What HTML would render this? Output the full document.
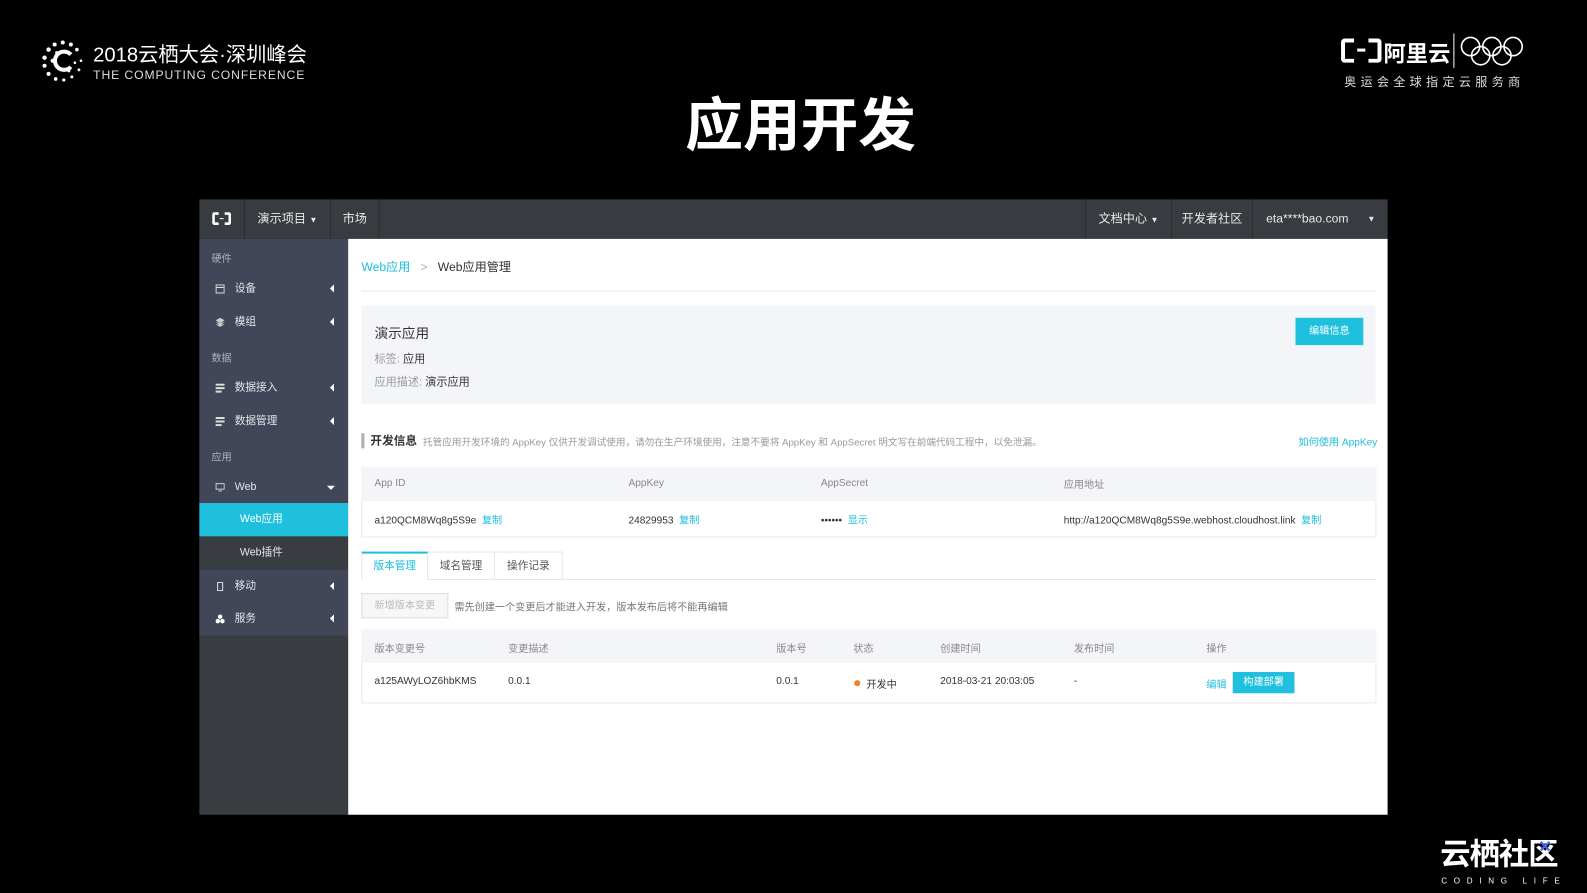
<!DOCTYPE html>
<html><head><meta charset="utf-8"><style>
*{margin:0;padding:0;box-sizing:border-box}
body{width:1587px;height:893px;background:#000;position:relative;overflow:hidden;font-family:"Liberation Sans","Noto Sans CJK SC",sans-serif;}
#wrap{position:absolute;left:0;top:0;width:1568px;height:882px;transform:scale(1.0121);transform-origin:0 0}
.a{position:absolute;white-space:nowrap}
.w{color:#fff}
.nav{position:absolute;left:197px;top:197px;width:1174px;height:39px;background:#383c41}
.nv{position:absolute;top:0;height:39px;line-height:39px;color:#e8e8e8;font-size:12px;border-right:1px solid #2b2e32;text-align:center}
.side{position:absolute;left:197px;top:236px;width:147px;height:569px;background:#393d42}
.sb{position:absolute;left:0;top:0;width:147px;height:392px;background:#424659}
.sl{position:absolute;left:12px;font-size:10px;color:#aeb1bd}
.si{position:absolute;left:0;width:147px;height:33px;line-height:33px;font-size:10.5px;color:#e4e5ea;padding-left:35px}
.si .ic{position:absolute;left:16px;top:12px;width:9px;height:9px}
.si .ar{position:absolute;right:14px;top:12px;width:0;height:0;border-top:4px solid transparent;border-bottom:4px solid transparent;border-right:4px solid #fff}
.main{position:absolute;left:344px;top:236px;width:1027px;height:569px;background:#fff}
.t{font-size:10px;color:#333}
.g{color:#888}
.b{color:#1fbfde}
</style></head><body><div id="wrap">
<svg class="a" style="left:40px;top:38px" width="44" height="44" viewBox="0 0 44 44">
<g fill="#fff">
<circle cx="22" cy="4" r="2"/><circle cx="30" cy="6" r="2"/><circle cx="36" cy="11" r="1.8"/><circle cx="14" cy="6" r="2"/><circle cx="8" cy="11" r="2.2"/><circle cx="4" cy="19" r="2.2"/><circle cx="4" cy="27" r="2"/><circle cx="8" cy="35" r="2"/><circle cx="15" cy="40" r="1.8"/><circle cx="23" cy="41" r="1.6"/><circle cx="31" cy="38" r="1.5"/><circle cx="38" cy="31" r="1.4"/><circle cx="40" cy="22" r="1.3"/><circle cx="12" cy="22" r="2"/><circle cx="16" cy="14" r="1.5"/><circle cx="28" cy="32" r="1.5"/><circle cx="34" cy="24" r="1.3"/>
</g>
<path d="M30 16 A9 9 0 1 0 30 28" stroke="#fff" stroke-width="4" fill="none"/>
</svg>
<div class="a w" style="left:92px;top:38px;font-size:20px">2018云栖大会·深圳峰会</div>
<div class="a" style="left:92px;top:67px;font-size:12px;color:#ddd;letter-spacing:0.9px">THE COMPUTING CONFERENCE</div>
<div class="a" style="left:1325px;top:38px;width:40px;height:24px">
<div style="position:absolute;left:0;top:0;width:13px;height:24px;border:4px solid #fff;border-right:none;border-radius:4px 0 0 4px"></div>
<div style="position:absolute;right:0;top:0;width:13px;height:24px;border:4px solid #fff;border-left:none;border-radius:0 4px 4px 0"></div>
<div style="position:absolute;left:16px;top:10px;width:8px;height:3px;background:#fff"></div>
</div>
<div class="a w" style="left:1367px;top:36px;font-size:22px;font-weight:bold">阿里云</div>
<div class="a" style="left:1436px;top:33px;width:1px;height:34px;background:#fff"></div>
<svg class="a" style="left:1442px;top:35px" width="64" height="32" viewBox="0 0 64 32" fill="none" stroke="#fff" stroke-width="1.6"><circle cx="11" cy="11" r="9"/><circle cx="32" cy="11" r="9"/><circle cx="53" cy="11" r="9"/><circle cx="21" cy="20" r="9"/><circle cx="42" cy="20" r="9"/></svg>
<div class="a" style="left:1328px;top:72px;font-size:12px;color:#ddd;letter-spacing:4.2px">奥运会全球指定云服务商</div>
<div class="a w" style="left:677px;top:79px;font-size:57px;font-weight:bold">应用开发</div>
<div class="nav">
<div class="nv" style="left:0;width:45px"><svg width="20" height="14" viewBox="0 0 20 14" style="margin-top:12px"><path d="M7 2H3Q2 2 2 3V11Q2 12 3 12H7M13 2H17Q18 2 18 3V11Q18 12 17 12H13" stroke="#fff" stroke-width="2.5" fill="none"/><path d="M8 7H12" stroke="#fff" stroke-width="1"/></svg></div>
<div class="nv" style="left:45px;width:85px">演示项目 <span style="font-size:8px">▼</span></div>
<div class="nv" style="left:130px;width:48px">市场</div>
<div class="nv" style="left:875px;width:86px;border-left:1px solid #2b2e32">文档中心 <span style="font-size:8px">▼</span></div>
<div class="nv" style="left:961px;width:80px">开发者社区</div>
<div class="nv" style="left:1041px;width:133px;border:none;text-align:left;padding-left:13px">eta****bao.com<span style="position:absolute;right:12px;font-size:8px">▼</span></div>
</div>
<div class="side"><div class="sb"></div>
<div class="sl" style="top:11px">硬件</div>
<div class="si" style="top:33px"><svg class="ic" viewBox="0 0 9 9"><rect x=".5" y=".5" width="8" height="8" fill="none" stroke="#ddd"/><path d="M1 3H8" stroke="#ddd"/></svg>设备<span class="ar"></span></div>
<div class="si" style="top:66px"><svg class="ic" viewBox="0 0 9 9"><path d="M4.5 0L9 2.5 4.5 5 0 2.5zM0 4.5L4.5 7 9 4.5M0 6.5L4.5 9 9 6.5" fill="#ccc"/></svg>模组<span class="ar"></span></div>
<div class="sl" style="top:109px">数据</div>
<div class="si" style="top:131px"><svg class="ic" viewBox="0 0 9 9"><path d="M0 0H9V2H0zM0 3.5H9V5.5H0zM0 7H6V9H0z" fill="#ddd"/></svg>数据接入<span class="ar"></span></div>
<div class="si" style="top:164px"><svg class="ic" viewBox="0 0 9 9"><path d="M0 0H9V2H0zM0 3.5H9V5.5H0zM0 7H6V9H0z" fill="#ddd"/></svg>数据管理<span class="ar"></span></div>
<div class="sl" style="top:207px">应用</div>
<div class="si" style="top:229px"><svg class="ic" viewBox="0 0 10 9"><rect x=".5" y=".5" width="9" height="6" fill="none" stroke="#ddd"/><path d="M3 8.5H7" stroke="#ddd"/></svg>Web<span style="position:absolute;right:13px;top:15px;border-left:4px solid transparent;border-right:4px solid transparent;border-top:4px solid #fff"></span></div>
<div class="si" style="top:261px;background:#1fbfde;color:#fff;padding-left:40px">Web应用</div>
<div class="si" style="top:294px;background:#393d42;padding-left:40px">Web插件</div>
<div class="si" style="top:327px"><svg class="ic" viewBox="0 0 9 9"><rect x="2" y="0.5" width="5" height="8" fill="none" stroke="#ddd"/></svg>移动<span class="ar"></span></div>
<div class="si" style="top:359px"><svg class="ic" viewBox="0 0 9 9"><circle cx="4.5" cy="2.3" r="2.2" fill="#fff"/><circle cx="2.2" cy="6.7" r="2.2" fill="#fff"/><circle cx="6.8" cy="6.7" r="2.2" fill="#fff"/></svg>服务<span class="ar"></span></div>
</div>
<div class="main">
<div class="a" style="left:13px;top:19px;font-size:12px"><span class="b">Web应用</span><span style="color:#aaa;margin:0 10px">&gt;</span><span style="color:#333">Web应用管理</span></div>
<div class="a" style="left:13px;top:51px;width:1002px;height:1px;background:#e5e5e5"></div>
<div class="a" style="left:13px;top:66px;width:1002px;height:97px;background:#f4f5f8"></div>
<div class="a" style="left:26px;top:82px;font-size:13.5px;color:#333">演示应用</div>
<div class="a" style="left:26px;top:110px;font-size:11px;color:#999">标签: <span style="color:#333">应用</span></div>
<div class="a" style="left:26px;top:133px;font-size:11px;color:#999">应用描述: <span style="color:#333">演示应用</span></div>
<div class="a" style="left:936px;top:78px;width:67px;height:27px;background:#1fbfde;color:#fff;font-size:10px;line-height:27px;text-align:center">编辑信息</div>
<div class="a" style="left:13px;top:192px;width:3px;height:15px;background:#aab0b8"></div>
<div class="a" style="left:22px;top:191px;font-size:11.5px;font-weight:bold;color:#333">开发信息</div>
<div class="a" style="left:74px;top:193px;font-size:9.5px;color:#999">托管应用开发环境的 AppKey 仅供开发调试使用，请勿在生产环境使用，注意不要将 AppKey 和 AppSecret 明文写在前端代码工程中，以免泄漏。</div>
<div class="a b" style="left:939px;top:192px;font-size:10px">如何使用 AppKey</div>
<div class="a" style="left:13px;top:225px;width:1003px;height:70px;border:1px solid #eaeaea"></div>
<div class="a" style="left:13px;top:225px;width:1003px;height:34px;background:#f4f5f8"></div>
<div class="a t g" style="left:26px;top:236px">App ID</div>
<div class="a t g" style="left:277px;top:236px">AppKey</div>
<div class="a t g" style="left:467px;top:236px">AppSecret</div>
<div class="a t g" style="left:707px;top:234px">应用地址</div>
<div class="a t" style="left:26px;top:269px">a120QCM8Wq8g5S9e &nbsp;<span class="b">复制</span></div>
<div class="a t" style="left:277px;top:269px">24829953 &nbsp;<span class="b">复制</span></div>
<div class="a t" style="left:467px;top:269px">•••••• &nbsp;<span class="b">显示</span></div>
<div class="a t" style="left:707px;top:269px">http://a120QCM8Wq8g5S9e.webhost.cloudhost.link &nbsp;<span class="b">复制</span></div>
<div class="a" style="left:13px;top:336px;width:1003px;height:1px;background:#e5e5e5"></div>
<div class="a" style="left:13px;top:309px;width:66px;height:28px;background:#fff;border-top:2px solid #1fbfde;border-left:1px solid #e5e5e5;border-right:1px solid #e5e5e5;font-size:10.5px;color:#1fbfde;text-align:center;line-height:25px">版本管理</div>
<div class="a" style="left:79px;top:309px;width:66px;height:27px;border-top:1px solid #e5e5e5;border-right:1px solid #e5e5e5;font-size:10.5px;color:#555;text-align:center;line-height:26px">域名管理</div>
<div class="a" style="left:145px;top:309px;width:67px;height:27px;border-top:1px solid #e5e5e5;border-right:1px solid #e5e5e5;font-size:10.5px;color:#555;text-align:center;line-height:26px">操作记录</div>
<div class="a" style="left:13px;top:350px;width:86px;height:25px;background:#f7f7f7;border:1px solid #ddd;font-size:10px;color:#bbb;text-align:center;line-height:23px">新增版本变更</div>
<div class="a" style="left:105px;top:355px;font-size:10px;color:#777">需先创建一个变更后才能进入开发，版本发布后将不能再编辑</div>
<div class="a" style="left:13px;top:386px;width:1003px;height:73px;border:1px solid #eaeaea"></div>
<div class="a" style="left:13px;top:386px;width:1003px;height:33px;background:#f4f5f8"></div>
<div class="a t g" style="left:26px;top:396px">版本变更号</div>
<div class="a t g" style="left:158px;top:396px">变更描述</div>
<div class="a t g" style="left:423px;top:396px">版本号</div>
<div class="a t g" style="left:499px;top:396px">状态</div>
<div class="a t g" style="left:585px;top:396px">创建时间</div>
<div class="a t g" style="left:717px;top:396px">发布时间</div>
<div class="a t g" style="left:848px;top:396px">操作</div>
<div class="a t" style="left:26px;top:432px">a125AWyLOZ6hbKMS</div>
<div class="a t" style="left:158px;top:432px">0.0.1</div>
<div class="a t" style="left:423px;top:432px">0.0.1</div>
<div class="a" style="left:500px;top:436px;width:6px;height:6px;border-radius:50%;background:#f5822a"></div>
<div class="a t" style="left:512px;top:432px">开发中</div>
<div class="a t" style="left:585px;top:432px">2018-03-21 20:03:05</div>
<div class="a t" style="left:717px;top:432px">-</div>
<div class="a t b" style="left:848px;top:432px">编辑</div>
<div class="a" style="left:874px;top:428px;width:61px;height:21px;background:#1fbfde;color:#fff;font-size:10px;text-align:center;line-height:21px">构建部署</div>
</div>
<div class="a w" style="left:1423px;top:819px;font-size:30px;font-weight:bold;letter-spacing:-1px">云栖社<span style="display:inline-block;position:relative">区<span style="position:absolute;left:10px;top:8px;color:#3d6bf5;font-size:16px">✕</span></span></div>
<div class="a" style="left:1424px;top:866px;font-size:8px;color:#fff;letter-spacing:6.6px">CODING LIFE</div>
</div></body></html>
